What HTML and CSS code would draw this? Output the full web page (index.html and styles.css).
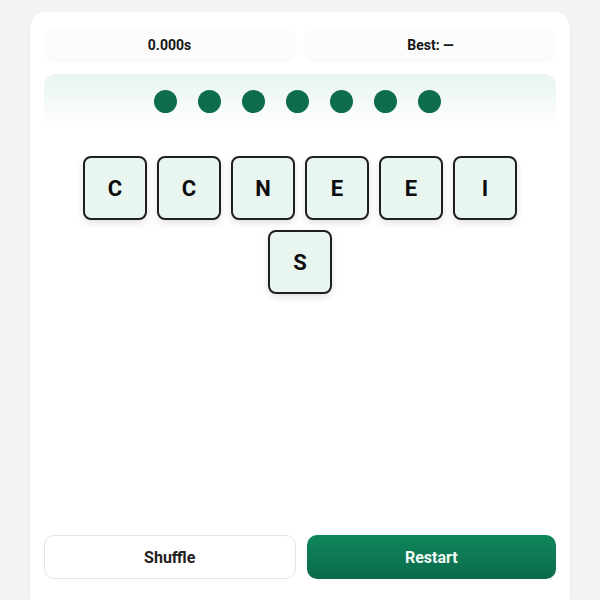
FILE: index.html
```html
<!DOCTYPE html>
<html lang="en">
<head>
<meta charset="utf-8">
<title>Word Game</title>
<link rel="stylesheet" href="styles.css">
</head>
<body>
<main class="card">
  <div class="stats">
    <div class="stat">0.000s</div>
    <div class="stat">Best: —</div>
  </div>
  <div class="slots">
    <span class="dot"></span><span class="dot"></span><span class="dot"></span><span class="dot"></span><span class="dot"></span><span class="dot"></span><span class="dot"></span>
  </div>
  <div class="tiles">
    <button class="tile">C</button>
    <button class="tile">C</button>
    <button class="tile">N</button>
    <button class="tile">E</button>
    <button class="tile">E</button>
    <button class="tile">I</button>
    <button class="tile">S</button>
  </div>
  <div class="actions">
    <button class="btn btn-light">Shuffle</button>
    <button class="btn btn-primary">Restart</button>
  </div>
</main>
</body>
</html>
```
FILE: styles.css
```css
* { box-sizing: border-box; }
html, body { margin: 0; padding: 0; }
body {
  background: #f3f3f3;
  font-family: Roboto, "Liberation Sans", sans-serif;
  height: 600px;
  overflow: hidden;
}
.card {
  margin: 12px 30px 0;
  width: 540px;
  height: 600px;
  background: #ffffff;
  border-radius: 16px;
  padding: 18px 14px 33px;
  display: flex;
  flex-direction: column;
  box-shadow: 0 1px 4px rgba(0,0,0,0.03);
}
.stats {
  display: flex;
  gap: 10px;
}
.stat {
  flex: 1;
  height: 30px;
  display: flex;
  align-items: center;
  justify-content: center;
  background: #fcfcfc;
  border-radius: 10px;
  box-shadow: 0 1px 3px rgba(0,0,0,0.04);
  font-size: 14px;
  font-weight: 700;
  color: #161616;
}
.slots {
  margin-top: 14px;
  height: 54px;
  border-radius: 12px;
  background: linear-gradient(to bottom, #e8f5ee, #ffffff);
  display: flex;
  align-items: center;
  justify-content: center;
  gap: 21px;
  padding-right: 6px;
}
.dot {
  width: 23px;
  height: 23px;
  border-radius: 50%;
  background: #0e6c4f;
}
.tiles {
  margin: 28px auto 0;
  width: 440px;
  display: flex;
  flex-wrap: wrap;
  justify-content: center;
  gap: 10px;
}
.tile {
  width: 64px;
  height: 64px;
  border: 2px solid #1f1f1f;
  border-radius: 8px;
  background: #e9f5ef;
  box-shadow: 0 3px 7px rgba(0,0,0,0.12);
  font-family: Roboto, "Liberation Sans", sans-serif;
  font-size: 22px;
  font-weight: 700;
  color: #0c0c0c;
  padding: 0;
}
.actions {
  margin-top: auto;
  display: flex;
  gap: 11px;
}
.btn {
  flex: 1;
  height: 44px;
  border-radius: 10px;
  font-family: Roboto, "Liberation Sans", sans-serif;
  font-size: 16px;
  font-weight: 700;
}
.btn-light {
  background: #ffffff;
  border: 1px solid #e4e4e4;
  color: #222;
}
.btn-primary {
  background: linear-gradient(to bottom, #0f875b, #0b6a4b);
  border: none;
  color: #f2fbf6;
}
```
